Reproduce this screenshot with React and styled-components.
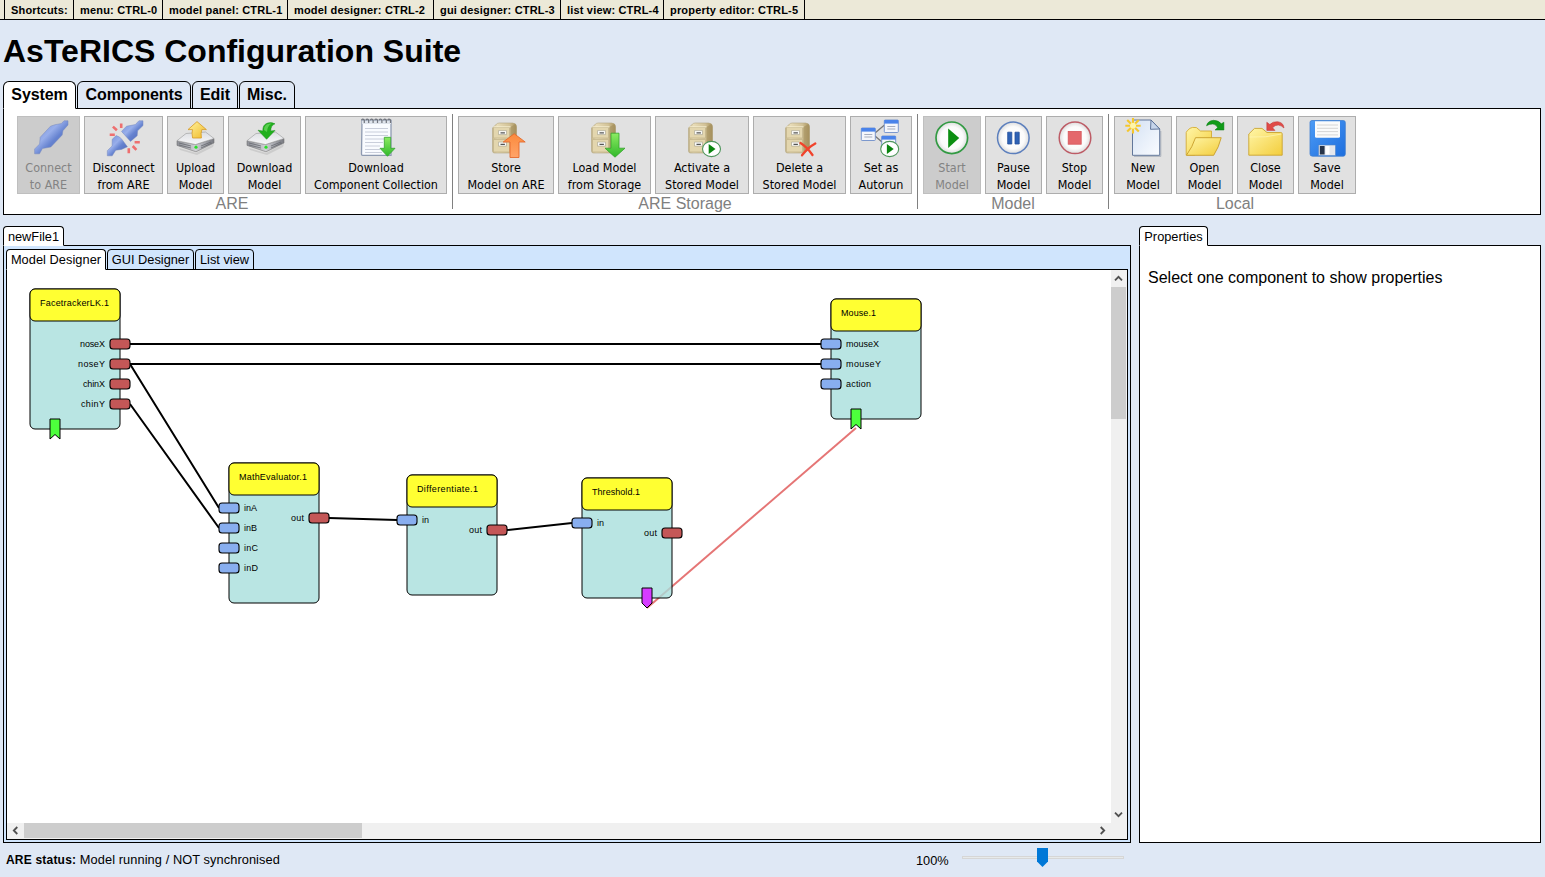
import React from 'react';
import styled, { createGlobalStyle } from 'styled-components';

const GlobalStyle = createGlobalStyle`
  * { box-sizing: border-box; }
  body {
    margin: 0;
    background: #dfe8f5;
    color: #000;
    font-family: "Liberation Sans", Arial, sans-serif;
    overflow: hidden;
  }
`;

const Page = styled.div`
  width: 1545px;
  height: 877px;
  display: flex;
  flex-direction: column;
`;

/* ---------- shortcuts and heading ---------- */

const ShortcutBar = styled.ul`
  display: flex;
  flex: none;
  height: 20px;
  margin: 0;
  padding: 0 0 0 4px;
  list-style: none;
  background: #ece9d8;
  border-bottom: 1px solid #000;
`;

const Shortcut = styled.li`
  width: ${(p) => p.$width}px;
  padding-left: 6px;
  border-left: 1px solid #000;
  font-size: 11px;
  font-weight: bold;
  line-height: 20px;
  letter-spacing: 0.18px;
  white-space: nowrap;
  &:last-child { border-right: 1px solid #000; }
`;

const Title = styled.h1`
  flex: none;
  height: 61px;
  margin: 0;
  padding-left: 3px;
  font-size: 32px;
  line-height: 62px;
  white-space: nowrap;
`;

/* ---------- tabs ---------- */

const TabRow = styled.div`
  display: flex;
  flex: none;
  gap: 1px;
  position: relative;
  z-index: 1;
  margin-bottom: -1px;
`;

const Tab = styled.div`
  width: ${(p) => p.$width}px;
  height: ${(p) => (p.$large ? 28 : p.$tall ? 21 : 20)}px;
  border: 1px solid #000;
  border-bottom-color: ${(p) => (p.$active ? '#fff' : '#000')};
  border-radius: ${(p) => (p.$large ? '6px 6px' : '4px 4px')} 0 0;
  background: ${(p) => (p.$active ? '#fff' : 'transparent')};
  font-size: ${(p) => (p.$large ? 16 : 12.8)}px;
  font-weight: ${(p) => (p.$large ? 'bold' : 'normal')};
  line-height: ${(p) => (p.$large ? 25 : 20)}px;
  letter-spacing: ${(p) => p.$spacing || 0}px;
  text-align: center;
  white-space: nowrap;
`;

/* ---------- ribbon ---------- */

const Ribbon = styled.section`
  flex: none;
  width: 1538px;
  margin-left: 3px;
`;

const RibbonPanel = styled.div`
  display: flex;
  height: 107px;
  padding: 5px 8px;
  border: 1px solid #000;
  background: #fff;
`;

const Group = styled.div`
  display: flex;
  flex-direction: column;
  padding: 2px 5px 0;
  border-right: ${(p) => (p.$last ? 'none' : '1px solid #808080')};
`;

const Buttons = styled.div`
  display: flex;
  gap: 4px;
`;

const GroupLabel = styled.div`
  font-size: 16px;
  line-height: 19px;
  color: #808080;
  text-align: center;
`;

const ToolButton = styled.button`
  display: flex;
  flex-direction: column;
  align-items: center;
  width: ${(p) => p.$width}px;
  height: 78px;
  margin: 0;
  padding: 0;
  border: 1px solid ${(p) => (p.disabled ? '#bfbfbf' : '#adadad')};
  background: ${(p) => (p.disabled ? '#cccccc' : '#e1e1e1')};
  color: ${(p) => (p.disabled ? '#838383' : '#000')};
  font-family: "DejaVu Sans Condensed", "DejaVu Sans", sans-serif;
  font-stretch: condensed;
  font-size: 12.45px;
  line-height: 17px;
  white-space: nowrap;
  svg { flex: none; margin-bottom: 2px; overflow: visible; }
`;

/* ---------- work area ---------- */

const Work = styled.main`
  display: flex;
  flex: none;
  gap: 8px;
  height: 628px;
  padding: 11px 0 0 3px;
`;

const Column = styled.section`
  display: flex;
  flex-direction: column;
  width: ${(p) => p.$width}px;
`;

const ModelPanel = styled.div`
  display: flex;
  flex-direction: column;
  height: 598px;
  padding: 3px 2px 2px;
  border: 1px solid #000;
  background: #d0e5fd;
`;

const Designer = styled.div`
  display: grid;
  grid-template: 553px 16px / 1104px 16px;
  height: 571px;
  border: 1px solid #000;
  background: #fff;
`;

const VerticalBar = styled.div`
  display: flex;
  flex-direction: column;
  background: #f0f0f0;
`;

const HorizontalBar = styled.div`
  display: flex;
  grid-column: 1 / 3;
  background: #f0f0f0;
`;

const ArrowCell = styled.div`
  display: flex;
  align-items: center;
  justify-content: center;
  width: ${(p) => p.$width}px;
  height: ${(p) => p.$height}px;
`;

const Thumb = styled.div`
  width: ${(p) => p.$width}px;
  height: ${(p) => p.$height}px;
  background: #cdcdcd;
`;

const Spacer = styled.div`
  flex: 1;
`;

const PropertiesPanel = styled.div`
  height: 598px;
  padding: 22px 8px;
  border: 1px solid #000;
  background: #fff;
  font-size: 16px;
  line-height: 20px;
`;

/* ---------- footer ---------- */

const Footer = styled.footer`
  display: flex;
  flex: 1;
  padding-left: 6px;
  font-size: 12.8px;
  line-height: 34px;
`;

const Status = styled.div`
  width: 910px;
  letter-spacing: 0.08px;
  b { font-size: 12px; letter-spacing: 0.2px; }
`;

const Zoom = styled.div`
  width: 46px;
  line-height: 35px;
`;

const Slider = styled.div`
  display: flex;
  align-items: center;
  justify-content: center;
  width: 162px;
  height: 3px;
  margin-top: 13px;
  padding-right: 1px;
  border: 1px solid #d6d6d6;
  background: #e7eaea;
  svg { flex: none; }
`;

/* ---------- ribbon icons ---------- */

const Icon = ({ children }) => (
  <svg width="40" height="40" viewBox="0 0 40 40">{children}</svg>
);

const Gradients = () => (
  <svg width="0" height="0" style={{ position: 'absolute' }}>
    <defs>
      <linearGradient id="plug" x1="0" y1="0" x2="1" y2="1">
        <stop offset="0" stopColor="#6f8cd8" /><stop offset=".4" stopColor="#98aeea" />
        <stop offset=".58" stopColor="#6683d0" /><stop offset="1" stopColor="#4a62b4" />
      </linearGradient>
      <linearGradient id="yellow" x1="0" y1="0" x2="1" y2="1">
        <stop offset="0" stopColor="#fff3a0" /><stop offset="1" stopColor="#f0ba28" />
      </linearGradient>
      <linearGradient id="folder" x1="0" y1="0" x2="1" y2="1">
        <stop offset="0" stopColor="#fff6a8" /><stop offset="1" stopColor="#f3cd3c" />
      </linearGradient>
      <linearGradient id="green" x1="0" y1="0" x2="0" y2="1">
        <stop offset="0" stopColor="#8cec62" /><stop offset="1" stopColor="#30b82a" />
      </linearGradient>
      <linearGradient id="orange" x1="0" y1="0" x2="0" y2="1">
        <stop offset="0" stopColor="#fb8a3c" /><stop offset="1" stopColor="#ffa469" />
      </linearGradient>
      <linearGradient id="metal" x1="0" y1="0" x2="0" y2="1">
        <stop offset="0" stopColor="#dcdee2" /><stop offset="1" stopColor="#f8f8fa" />
      </linearGradient>
      <linearGradient id="metalFront" x1="0" y1="0" x2="1" y2="0">
        <stop offset="0" stopColor="#8d8f96" /><stop offset=".5" stopColor="#d0d1d6" />
        <stop offset="1" stopColor="#777980" />
      </linearGradient>
      <linearGradient id="cabinet" x1="0" y1="0" x2="1" y2="0">
        <stop offset="0" stopColor="#c9b98b" /><stop offset=".2" stopColor="#e8dcb8" />
        <stop offset=".7" stopColor="#d2c297" /><stop offset="1" stopColor="#a8925c" />
      </linearGradient>
      <radialGradient id="ball">
        <stop offset="0" stopColor="#fff" /><stop offset=".7" stopColor="#fbfbfb" />
        <stop offset="1" stopColor="#dcdcdc" />
      </radialGradient>
      <linearGradient id="paper" x1="0" y1="0" x2="1" y2="1">
        <stop offset="0" stopColor="#d5e2f4" /><stop offset="1" stopColor="#fafcff" />
      </linearGradient>
      <linearGradient id="floppy" x1="0" y1="0" x2="1" y2="1">
        <stop offset="0" stopColor="#4d9bf5" /><stop offset="1" stopColor="#1d6ede" />
      </linearGradient>
    </defs>
  </svg>
);

const Drive = () => (
  <g>
    <path d="M3 31 L20 36 L38 27 L37 30 L21 38 L4 33Z" fill="#b8b8b8" opacity=".5" />
    <path d="M1 23.7 L19.5 27.5 L38 21.5 V26 L20 34.8 L1 28.4Z" fill="url(#metalFront)" stroke="#777" strokeWidth=".6" />
    <path d="M10 16.5 L29.5 15 L38 21.5 L19.5 27.5 L1 23.7Z" fill="url(#metal)" stroke="#999" strokeWidth=".6" />
    <path d="M3 26 L15 29 M3 28 L15 31 M25 29 L35 25 M25 31 L36 26" stroke="#66686e" strokeWidth=".8" />
    <circle cx="20" cy="30.2" r="1.6" fill="#2be02b" />
  </g>
);

const Cabinet = ({ x = 6.5 }) => (
  <g transform={`translate(${x} 6)`}>
    <path d="M0 5 L4 1 Q5 0 7 0 H20 Q24 0 24 4 V26 L19 30 H2 Q0 30 0 28Z" fill="url(#cabinet)" stroke="#b3a681" strokeWidth=".6" />
    <path d="M18 4 L23 1 Q24 2 24 4 V26 L18 30Z" fill="#a38f5d" opacity=".6" />
    <path d="M1 4.5 H17 V15 H1Z M1 16.5 H17 V29 H1Z" fill="#e3d6ae" stroke="#c0b188" strokeWidth=".7" />
    <path d="M1 3.8 H18" stroke="#f6edcf" />
    <path d="M6 7.6 H14 V11.6 H6Z M6 19.1 H14 V23.1 H6Z" fill="#fafaf7" stroke="#a5a08c" strokeWidth=".6" />
    <path d="M8 9.9 H12.4 M8 21.4 H12.4" fill="none" stroke="#555" strokeWidth="1.2" />
  </g>
);

const DownArrow = ({ x, y, half, stem, height, neck }) => (
  <path
    d={`M${x - stem} ${y} H${x + stem} V${y + neck} H${x + half} L${x} ${y + height} L${x - half} ${y + neck} H${x - stem}Z`}
    fill="url(#green)" stroke="#35a52d" strokeWidth=".8" strokeLinejoin="round"
  />
);

const PlayBadge = ({ x }) => (
  <g>
    <ellipse cx={x} cy="32" rx="9" ry="7.6" fill="#fff" stroke="#4f965c" strokeWidth="1.1" />
    <path d={`M${x - 2.8} 27 L${x + 4} 32 L${x - 2.8} 37Z`} fill="#0a850f" />
  </g>
);

const MiniWindow = ({ x, y }) => (
  <g>
    <rect x={x} y={y} width="14" height="12.5" rx=".8" fill="#f4f6fb" stroke="#6f8fc8" strokeWidth=".9" />
    <rect x={x} y={y} width="14" height="3.6" fill="#4a83ea" />
    <path d={`M${x + 3} ${y + 6.5} H${x + 11} M${x + 3} ${y + 9} H${x + 11}`} stroke="#a6adbd" strokeWidth="1" />
  </g>
);

const icons = {
  connect: (
    <Icon>
      <path d="M32.3 6.6 L35 3.8 H39 V8 L33.9 13.7 L33.2 18 L21.8 30 L13.4 31.5 L10.5 36.8 H5.6 V32 L10.6 27 L11.2 20.3 L21.5 9.2 L26 7.7Z" fill="url(#plug)" stroke="#7789bd" strokeWidth=".5" strokeLinejoin="round" />
    </Icon>
  ),
  disconnect: (
    <Icon>
      <path d="M31.3 7.6 L34.9 3.8 H39 V8.6 L33.6 13.8 L33.2 18.7 L26.5 24.4 L17.5 14.4 L22.5 9.2Z" fill="url(#plug)" stroke="#7789bd" strokeWidth=".5" strokeLinejoin="round" />
      <path d="M12.2 18.6 Q16 19.5 18 22.5 L23.4 29.8 L17.5 32.4 L11.7 33.2 L8.2 38.8 H3.3 V33.7 L8.1 29 L8.2 22.3Z" fill="url(#plug)" stroke="#7789bd" strokeWidth=".5" strokeLinejoin="round" />
      <path d="M17.2 11 V6.4 M12.9 13.3 L8.9 9.6 M10.8 17.7 H5.7 M30.6 25.3 H35.8 M28.7 29 L32.4 32.8 M24.8 31.3 V36.2" stroke="#ee6f6f" strokeWidth="2.6" />
    </Icon>
  ),
  upload: (
    <Icon>
      <Drive />
      <path d="M21 4.6 L30.4 12.6 H25.8 Q24.6 16 25.4 21 H16.6 Q15.5 16 16.5 12.6 H12Z" fill="url(#yellow)" stroke="#d79b26" strokeWidth=".8" />
    </Icon>
  ),
  download: (
    <Icon>
      <g transform="translate(1 0)"><Drive /></g>
      <path d="M21.6 22.3 L13 13.2 L17.8 14 Q17.5 8 22 6.2 Q26 4.8 30 6.8 Q25.7 8.4 25.7 14 L30 13.4Z" fill="#22b01e" stroke="#168f18" strokeWidth=".5" />
      <path d="M19 13 Q19 8.3 23 7 Q25 6.3 26.5 6.8 Q22.2 9 22 15" fill="#71dc64" opacity=".7" />
    </Icon>
  ),
  notepad: (
    <Icon>
      <path d="M6 3.5 H35 V38.4 H6.5 Q5.5 38.4 5.5 37Z" fill="#f9fbff" stroke="#8e9ab1" strokeWidth="1.3" />
      <path d="M9 11.5 H32 M9 15 H32 M9 18.5 H32 M9 22 H32 M9 25.5 H27 M9 29 H24 M9 32.5 H24 M9 35.5 H26" stroke="#c9cedb" />
      <path d="M6 3.5 H35 V7 H6Z" fill="#dfe4ec" />
      <path d="M8.3 6 V3 q-2-2 -2.8 .3 M12.7 6 V3 q-2-2 -2.8 .3 M17.1 6 V3 q-2-2 -2.8 .3 M21.5 6 V3 q-2-2 -2.8 .3 M25.9 6 V3 q-2-2 -2.8 .3 M30.3 6 V3 q-2-2 -2.8 .3 M34.5 6 V3 q-2-2 -2.8 .3" fill="none" stroke="#70747d" strokeWidth="1.2" />
      <DownArrow x={31.5} y={20.3} half={7.5} stem={3.2} neck={11} height={19} />
    </Icon>
  ),
  store: (
    <Icon>
      <Cabinet />
      <path d="M28.2 16.7 L39.2 25 H33 V40.5 H24 V25 H17.2Z" fill="url(#orange)" stroke="#e46a2c" strokeWidth=".9" strokeLinejoin="round" />
    </Icon>
  ),
  load: (
    <Icon>
      <Cabinet />
      <DownArrow x={30} y={16.2} half={10} stem={4} neck={15} height={24} />
    </Icon>
  ),
  activate: <Icon><Cabinet /><PlayBadge x={29.5} /></Icon>,
  remove: (
    <Icon>
      <Cabinet x={5.5} />
      <path d="M20.5 26 Q27 30 32.5 38 M35.3 26.5 Q28 30.5 22 38.3" fill="none" stroke="#f1432c" strokeWidth="2.3" strokeLinecap="round" />
    </Icon>
  ),
  autorun: (
    <Icon>
      <path d="M14 16 L23.5 8 M14 19 L21 25" stroke="#777" strokeWidth="1.3" />
      <MiniWindow x={23.3} y={3} />
      <MiniWindow x={0.3} y={11} />
      <MiniWindow x={20.7} y={19} />
      <PlayBadge x={28.7} />
    </Icon>
  ),
  start: (
    <Icon>
      <circle cx="19.8" cy="20.8" r="15.8" fill="url(#ball)" stroke="#329a43" strokeWidth="1.7" />
      <path d="M16.2 11.5 L27.2 21 L16.2 31Z" fill="#0b8e11" />
    </Icon>
  ),
  pause: (
    <Icon>
      <circle cx="19.3" cy="20.8" r="15.8" fill="url(#ball)" stroke="#5c7fbd" strokeWidth="1.5" />
      <path d="M13.7 15.2 H17.8 V27 H13.7Z M21 15.2 H25.2 V27 H21Z" fill="#2e62b5" stroke="#234f9c" strokeWidth=".8" />
    </Icon>
  ),
  stop: (
    <Icon>
      <circle cx="20" cy="20.8" r="15.8" fill="url(#ball)" stroke="#bd5c66" strokeWidth="1.5" />
      <rect x="13.2" y="14.4" width="13" height="12.8" fill="#e4686c" stroke="#d5565b" strokeWidth=".8" />
    </Icon>
  ),
  create: (
    <Icon>
      <path d="M11 39.4 H37.8 V14" fill="none" stroke="#8d97a5" strokeWidth="1" opacity=".6" />
      <path d="M9.5 3 H28 L36.7 12 V38.3 H9.5Z" fill="url(#paper)" stroke="#62779a" strokeWidth="1" />
      <path d="M28 3 L27.5 12.3 L36.7 12Z" fill="#c6d5eb" stroke="#536a91" strokeWidth=".9" />
      <path d="M10 1 V16.4 M2.3 8.7 H17.7 M4.2 2.9 L15.8 14.5 M15.8 2.9 L4.2 14.5" stroke="#f5c72c" strokeWidth="2.1" />
      <circle cx="10" cy="8.7" r="3" fill="#fff5a8" />
    </Icon>
  ),
  open: (
    <Icon>
      <path d="M1.2 38 V15.5 Q1.5 14 5 11.3 Q7 9.8 11.5 10.6 L15.5 14 H26.5 V21 L9.8 38Z" fill="url(#folder)" stroke="#d4ac35" strokeWidth=".9" />
      <path d="M10.5 20.7 H36.2 Q34 30 28.7 38.3 H1.4 Q7.5 30 10.5 20.7Z" fill="url(#folder)" stroke="#c79d29" strokeWidth=".9" />
      <path d="M21.5 8.8 Q22.5 4 28.5 3.3 Q34 3.4 36.2 6.8 L38.9 5.2 V13 H30 L32.6 10.6 Q31 7.2 27.7 7 Q24 7 21.5 8.8Z" fill="#109b18" stroke="#0b7a12" strokeWidth=".5" />
    </Icon>
  ),
  close: (
    <Icon>
      <path d="M2.8 38.2 V17 L8.5 11.4 H16 L21 15.5 H34.8 Q36.2 15.5 36.2 17 V38.2Z" fill="url(#folder)" stroke="#cba430" strokeWidth=".9" />
      <path d="M3.5 20 Q20 21 35.5 17" stroke="#fff6b7" fill="none" opacity=".7" />
      <path d="M38 11 Q37.5 5.5 31.8 4.7 Q26.5 4.3 23.9 7.6 L20.8 5.2 V13.4 H29 L26.6 10.8 Q29 7.8 32.4 8.1 Q35.2 8.3 38 11Z" fill="#e04b47" stroke="#bd3535" strokeWidth=".5" />
    </Icon>
  ),
  save: (
    <Icon>
      <path d="M5 3.5 H36.3 Q38.3 3.5 38.3 5.5 V37 Q38.3 39.2 36.3 39.2 H5.5 Q3 39.2 3 37 V5.5 Q3 3.5 5 3.5Z" fill="url(#floppy)" stroke="#3f7fd0" strokeWidth=".8" />
      <path d="M8 4.3 H33 V19.3 Q33 20.8 31.5 20.8 H9.5 Q8 20.8 8 19.3Z" fill="#fbfbfb" />
      <path d="M10 8 H31 M10 11.3 H31 M10 14.6 H31 M10 17.9 H31" stroke="#d6d6d6" />
      <path d="M11.5 28 H28.5 V38.6 H11.5Z" fill="#e4e7ed" stroke="#4e83c8" strokeWidth=".6" />
      <path d="M12.8 29 H17.6 V37.5 H12.8Z" fill="#273449" />
      <path d="M18.6 29 H22.5 V37.5 H18.6Z" fill="#fff" />
    </Icon>
  ),
};

/* ---------- model diagram ---------- */

const DiagramText = styled.text`
  font-family: "Liberation Sans", Arial, sans-serif;
  font-size: 9px;
  fill: #000;
`;

const Canvas = styled.svg`
  display: block;
`;

const Port = ({ x, y, color }) => (
  <rect x={x - 10} y={y - 5} width="20" height="10" rx="3" fill={color} stroke="#000" strokeWidth="1.1" />
);

const ModelNode = ({ x, y, h, name, nameWidth, inputs = [], outputs = [] }) => (
  <g>
    <rect x={x} y={y} width="90" height={h} rx="5" fill="#a8dfdc" fillOpacity=".8" stroke="#000" />
    <rect x={x} y={y} width="90" height="32" rx="5" fill="#ffff32" stroke="#000" />
    <DiagramText x={x + 10} y={y + 17} textLength={nameWidth}>{name}</DiagramText>
    {inputs.map(([label, py, w]) => (
      <g key={label}>
        <Port x={x} y={py} color="#88aeef" />
        <DiagramText x={x + 15} y={py + 3} textLength={w}>{label}</DiagramText>
      </g>
    ))}
    {outputs.map(([label, py, w]) => (
      <g key={label}>
        <Port x={x + 90} y={py} color="#c45757" />
        <DiagramText x={x + 75 - w} y={py + 3} textLength={w}>{label}</DiagramText>
      </g>
    ))}
  </g>
);

const nodes = [
  { x: 30, y: 289, h: 140, name: 'FacetrackerLK.1', nameWidth: 69, outputs: [['noseX', 344, 25], ['noseY', 364, 27], ['chinX', 384, 22], ['chinY', 404, 24]] },
  { x: 229, y: 463, h: 140, name: 'MathEvaluator.1', nameWidth: 68, inputs: [['inA', 508, 13], ['inB', 528, 13], ['inC', 548, 14], ['inD', 568, 14]], outputs: [['out', 518, 13]] },
  { x: 407, y: 475, h: 120, name: 'Differentiate.1', nameWidth: 61, inputs: [['in', 520, 7]], outputs: [['out', 530, 13]] },
  { x: 582, y: 478, h: 120, name: 'Threshold.1', nameWidth: 48, inputs: [['in', 523, 7]], outputs: [['out', 533, 13]] },
  { x: 831, y: 299, h: 120, name: 'Mouse.1', nameWidth: 35, inputs: [['mouseX', 344, 33], ['mouseY', 364, 35], ['action', 384, 25]] },
];

const Diagram = () => (
  <Canvas width="1104" height="553" viewBox="7 270 1104 553">
    <path d="M130 344 H821 M130 364 H821 M130 364 L219 508 M130 404 L219 528 M329 518 L397 520 M507 530 L572 523" fill="none" stroke="#000" strokeWidth="2" />
    <path d="M647 608 L856 428" stroke="#e57575" strokeWidth="2" />
    {nodes.map((n) => <ModelNode key={n.name} {...n} />)}
    <path d="M50 419 H60 V439 L55 434.5 L50 439Z" fill="#4dff3c" stroke="#000" />
    <path d="M851 409 H861 V429 L856 424.5 L851 429Z" fill="#4dff3c" stroke="#000" />
    <path d="M642 588 H652 V603 L647 608 L642 603Z" fill="#d63cff" stroke="#000" />
  </Canvas>
);

const Chevron = ({ turn = 0 }) => (
  <svg width="9" height="9" viewBox="0 0 9 9">
    <path d="M1 6.3 L4.5 2.8 L8 6.3" transform={`rotate(${turn} 4.5 4.5)`} fill="none" stroke="#505050" strokeWidth="1.8" />
  </svg>
);

/* ---------- content ---------- */

const shortcuts = [
  ['Shortcuts:', 69], ['menu: CTRL-0', 89], ['model panel: CTRL-1', 125], ['model designer: CTRL-2', 146],
  ['gui designer: CTRL-3', 127], ['list view: CTRL-4', 103], ['property editor: CTRL-5', 142],
];

const groups = [
  { label: 'ARE', buttons: [
    ['connect', 'Connect', 'to ARE', 63, true], ['disconnect', 'Disconnect', 'from ARE', 79],
    ['upload', 'Upload', 'Model', 57], ['download', 'Download', 'Model', 73],
    ['notepad', 'Download', 'Component Collection', 142],
  ] },
  { label: 'ARE Storage', buttons: [
    ['store', 'Store', 'Model on ARE', 96], ['load', 'Load Model', 'from Storage', 93],
    ['activate', 'Activate a', 'Stored Model', 94], ['remove', 'Delete a', 'Stored Model', 93],
    ['autorun', 'Set as', 'Autorun', 62],
  ] },
  { label: 'Model', buttons: [
    ['start', 'Start', 'Model', 58, true], ['pause', 'Pause', 'Model', 57], ['stop', 'Stop', 'Model', 57],
  ] },
  { label: 'Local', buttons: [
    ['create', 'New', 'Model', 58], ['open', 'Open', 'Model', 57], ['close', 'Close', 'Model', 57], ['save', 'Save', 'Model', 58],
  ] },
];

export default function App() {
  return (
    <Page>
      <GlobalStyle />
      <Gradients />
      <ShortcutBar>
        {shortcuts.map(([text, width]) => <Shortcut key={text} $width={width}>{text}</Shortcut>)}
      </ShortcutBar>
      <Title>AsTeRICS Configuration Suite</Title>
      <Ribbon>
        <TabRow>
          <Tab $large $active $width={73} $spacing={-0.1}>System</Tab>
          <Tab $large $width={114} $spacing={-0.08}>Components</Tab>
          <Tab $large $width={46}>Edit</Tab>
          <Tab $large $width={56}>Misc.</Tab>
        </TabRow>
        <RibbonPanel>
          {groups.map((group, i) => (
            <Group key={group.label} $last={i === groups.length - 1}>
              <Buttons>
                {group.buttons.map(([icon, first, second, width, disabled]) => (
                  <ToolButton key={icon} $width={width} disabled={disabled}>
                    {icons[icon]}
                    <span>{first}</span>
                    <span>{second}</span>
                  </ToolButton>
                ))}
              </Buttons>
              <GroupLabel>{group.label}</GroupLabel>
            </Group>
          ))}
        </RibbonPanel>
      </Ribbon>
      <Work>
        <Column $width={1128}>
          <TabRow><Tab $active $width={61}>newFile1</Tab></TabRow>
          <ModelPanel>
            <TabRow>
              <Tab $tall $active $width={100} $spacing={0.04}>Model Designer</Tab>
              <Tab $tall $width={87}>GUI Designer</Tab>
              <Tab $tall $width={59}>List view</Tab>
            </TabRow>
            <Designer>
              <Diagram />
              <VerticalBar>
                <ArrowCell $width={15} $height={17}><Chevron /></ArrowCell>
                <Thumb $width={15} $height={132} />
                <Spacer />
                <ArrowCell $width={15} $height={17}><Chevron turn={180} /></ArrowCell>
              </VerticalBar>
              <HorizontalBar>
                <ArrowCell $width={17} $height={15}><Chevron turn={-90} /></ArrowCell>
                <Thumb $width={338} $height={15} />
                <Spacer />
                <ArrowCell $width={17} $height={15}><Chevron turn={90} /></ArrowCell>
                <ArrowCell $width={16} $height={15} />
              </HorizontalBar>
            </Designer>
          </ModelPanel>
        </Column>
        <Column $width={402}>
          <TabRow><Tab $active $width={69}>Properties</Tab></TabRow>
          <PropertiesPanel>Select one component to show properties</PropertiesPanel>
        </Column>
      </Work>
      <Footer>
        <Status><b>ARE status:</b> Model running / NOT synchronised</Status>
        <Zoom>100%</Zoom>
        <Slider>
          <svg width="11" height="19" viewBox="0 0 11 19">
            <path d="M0 0 H11 V13.5 L5.5 19 L0 13.5Z" fill="#0078d7" />
          </svg>
        </Slider>
      </Footer>
    </Page>
  );
}
